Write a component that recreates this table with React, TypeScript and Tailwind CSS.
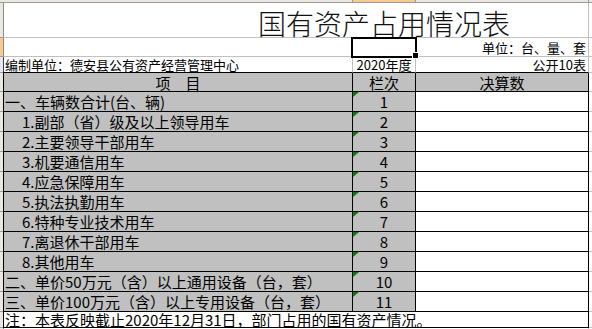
import React from "react";

const items: { label: string; indent: boolean; no: string }[] = [
  { label: "一、车辆数合计(台、辆)", indent: false, no: "1" },
  { label: "1.副部（省）级及以上领导用车", indent: true, no: "2" },
  { label: "2.主要领导干部用车", indent: true, no: "3" },
  { label: "3.机要通信用车", indent: true, no: "4" },
  { label: "4.应急保障用车", indent: true, no: "5" },
  { label: "5.执法执勤用车", indent: true, no: "6" },
  { label: "6.特种专业技术用车", indent: true, no: "7" },
  { label: "7.离退休干部用车", indent: true, no: "8" },
  { label: "8.其他用车", indent: true, no: "9" },
  { label: "二、单价50万元（含）以上通用设备（台，套）", indent: false, no: "10" },
  { label: "三、单价100万元（含）以上专用设备（台，套）", indent: false, no: "11" },
];

function Tri() {
  return (
    <svg className="absolute left-0 top-0" width="6" height="5" viewBox="0 0 6 5">
      <polygon points="0,0 6,0 0,5" fill="#008000" />
    </svg>
  );
}

export default function App() {
  return (
    <div className="relative w-[592px] h-[329px] overflow-hidden bg-white text-black font-['Noto_Sans_CJK_SC','Noto_Sans_CJK_SC',sans-serif]">
      {/* column header strip */}
      <div className="flex h-[3px]">
        <div className="w-[3px] shrink-0 bg-[#ebe9df] border-b border-[#9a9a9a]" />
        <div className="w-[350px] shrink-0 bg-[#ebe9df] border-r border-b border-[#9a9a9a]" />
        <div className="w-[63px] shrink-0 bg-[#fcc98a] border-r border-b border-[#9a9a9a]" />
        <div className="w-[173px] shrink-0 bg-[#ebe9df] border-r border-b border-[#9a9a9a]" />
        <div className="flex-1 bg-[#ebe9df] border-b border-[#9a9a9a]" />
      </div>

      {/* title row */}
      <div className="flex h-[35px]">
        <div className="w-[3px] shrink-0 bg-[#ebe9df] border-b border-[#9a9a9a]" />
        <div className="w-[586px] shrink-0 flex items-end pl-[254px] border-l border-l-[#8a8a8a] border-r border-b border-r-[#c0c0c0] border-b-[#c0c0c0]">
          <span className="text-[28px] leading-[28px] font-light text-[#111]">国有资产占用情况表</span>
        </div>
        <div className="flex-1 border-b border-[#c0c0c0]" />
      </div>

      {/* unit row */}
      <div className="flex h-[19px]">
        <div className="w-[3px] shrink-0 bg-[#fcc98a] border-b border-[#9a9a9a]" />
        <div className="w-[350px] shrink-0 border-l border-l-[#8a8a8a] border-r border-b border-[#c0c0c0]" />
        <div className="w-[63px] shrink-0 border-r border-b border-[#c0c0c0]" />
        <div className="w-[173px] shrink-0 flex items-center justify-end pr-[2px] text-[13px] leading-none border-r border-b border-[#c0c0c0]">
          单位：台、量、套
        </div>
        <div className="flex-1 border-b border-[#c0c0c0]" />
      </div>

      {/* compiling unit row */}
      <div className="flex h-[16px]">
        <div className="w-[3px] shrink-0 bg-[#ebe9df] border-b border-[#9a9a9a]" />
        <div className="w-[350px] shrink-0 flex items-center pl-[1px] text-[13px] leading-none border-l border-l-[#2a3a9a] border-r border-r-[#c0c0c0] border-b border-b-black">
          编制单位：德安县公有资产经营管理中心
        </div>
        <div className="w-[63px] shrink-0 flex items-center justify-center text-[13px] leading-none border-r border-r-[#c0c0c0] border-b border-b-black">
          2020年度
        </div>
        <div className="w-[173px] shrink-0 flex items-center justify-end pr-[2px] text-[13px] leading-none border-r border-r-[#c0c0c0] border-b border-b-black">
          公开10表
        </div>
        <div className="flex-1 border-b border-[#c0c0c0]" />
      </div>

      {/* header row */}
      <div className="flex h-[19px]">
        <div className="w-[3px] shrink-0 bg-[#ebe9df] border-b border-[#9a9a9a]" />
        <div className="w-[350px] shrink-0 flex items-center justify-center bg-[#c0c0c0] text-[15px] leading-none border-l border-r border-b border-black">
          项　目
        </div>
        <div className="w-[63px] shrink-0 flex items-center justify-center bg-[#c0c0c0] text-[15px] leading-none border-r border-b border-black">
          栏次
        </div>
        <div className="w-[173px] shrink-0 flex items-center justify-center bg-[#c0c0c0] text-[15px] leading-none border-r border-b border-black">
          决算数
        </div>
        <div className="flex-1 border-b border-[#c0c0c0]" />
      </div>

      {/* data rows */}
      {items.map((it) => (
        <div key={it.no} className="flex h-[20px]">
          <div className="w-[3px] shrink-0 bg-[#ebe9df] border-b border-[#9a9a9a]" />
          <div
            className={
              "w-[350px] shrink-0 flex items-center bg-[#c0c0c0] text-[15px] leading-none whitespace-nowrap border-l border-r border-b border-black " +
              (it.indent ? "pl-[18px]" : "pl-[1px]")
            }
          >
            {it.label}
          </div>
          <div className="relative w-[63px] shrink-0 flex items-center justify-center bg-[#c0c0c0] text-[15px] leading-none border-r border-b border-black">
            <Tri />
            {it.no}
          </div>
          <div className="w-[173px] shrink-0 bg-white border-r border-b border-black" />
          <div className="flex-1 border-b border-[#c0c0c0]" />
        </div>
      ))}

      {/* note row */}
      <div className="flex h-[16px]">
        <div className="w-[3px] shrink-0 bg-[#ebe9df] border-b border-[#9a9a9a]" />
        <div className="w-[586px] shrink-0 flex items-center pl-[1px] text-[15px] leading-none whitespace-nowrap border-l border-r border-b border-black">
          注：本表反映截止2020年12月31日，部门占用的国有资产情况。
        </div>
        <div className="flex-1 border-b border-[#c0c0c0]" />
      </div>
      <div className="flex h-[4px]">
        <div className="w-[3px] shrink-0 bg-[#ebe9df]" />
        <div className="w-[586px] shrink-0 border-l border-[#8a8a8a] border-r border-r-[#c0c0c0]" />
      </div>

      {/* active cell selection */}
      <div className="absolute left-[351px] top-[37px] w-[66px] h-[21px] border-2 border-black" />
      <div className="absolute left-[412px] top-[52px] w-[7px] h-[7px] bg-black border border-white" />
    </div>
  );
}
